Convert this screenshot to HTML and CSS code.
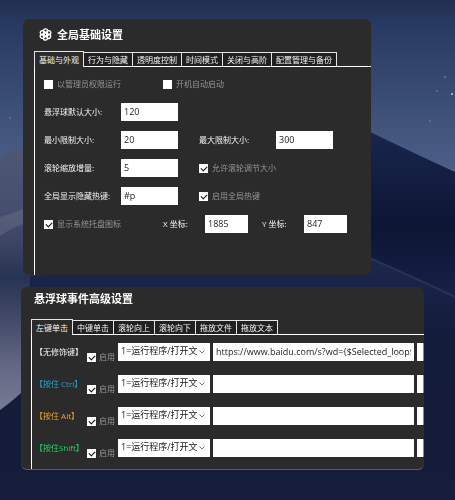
FILE: index.html
```html
<!DOCTYPE html>
<html lang="zh-CN">
<head>
<meta charset="utf-8">
<meta name="viewport" content="width=device-width, initial-scale=1">
<title>悬浮球设置</title>
<link rel="stylesheet" href="styles.css">
</head>
<body>
<svg class="wallpaper" viewBox="0 0 455 500" preserveAspectRatio="none" aria-hidden="true">
  <defs>
    <linearGradient id="sky" x1="0" y1="0" x2="0" y2="1">
      <stop offset="0" stop-color="#21304f"/>
      <stop offset=".05" stop-color="#293a62"/>
      <stop offset=".2" stop-color="#3a4d74"/>
      <stop offset=".34" stop-color="#4d5f88"/>
    </linearGradient>
    <linearGradient id="left" x1="0" y1="0" x2="0" y2="1">
      <stop offset="0" stop-color="#4e5773"/>
      <stop offset=".22" stop-color="#464f6e"/>
      <stop offset=".34" stop-color="#3d4665"/>
      <stop offset=".48" stop-color="#283453"/>
      <stop offset=".6" stop-color="#3d4563"/>
      <stop offset=".8" stop-color="#626783"/>
      <stop offset="1" stop-color="#7b7f98"/>
    </linearGradient>
    <linearGradient id="right" x1="0" y1="0" x2="0" y2="1">
      <stop offset="0" stop-color="#1a2750"/>
      <stop offset=".5" stop-color="#0d1534"/>
      <stop offset="1" stop-color="#1c2750"/>
    </linearGradient>
    <linearGradient id="floor" x1="0" y1="0" x2="0" y2="1">
      <stop offset="0" stop-color="#1c284e"/>
      <stop offset=".3" stop-color="#141c3c"/>
      <stop offset="1" stop-color="#161c39"/>
    </linearGradient>
  </defs>
  <rect width="455" height="500" fill="url(#sky)"/>
  <path d="M0 158 Q12 149 30 146 L200 160 V420 H0Z" fill="url(#left)"/>
  <path d="M0 217 Q14 213 30 206 V222 Q14 226 0 236Z" fill="#8a8fa5" opacity=".25"/>
  <path d="M350 122 Q390 142 455 172 V330 H350Z" fill="url(#right)"/>
  <path d="M0 410 Q14 400 24 390 L30 276 Q200 266 365 256 Q420 280 455 297 V500 H0Z" fill="url(#floor)"/>
  <path d="M365 256 Q420 280 455 297" fill="none" stroke="#263259" stroke-width="2"/>
  <g fill="#c3cbe0">
    <circle cx="445" cy="77" r="1" opacity=".4"/>
    <circle cx="452" cy="94" r="1"/>
    <circle cx="437" cy="91" r="1" opacity=".3"/>
    <circle cx="430" cy="121" r="1" opacity=".3"/>
    <circle cx="10" cy="118" r="1" opacity=".3"/>
  </g>
</svg>

<main class="desktop">
  <section class="panel panel-global" aria-labelledby="global-title">
    <h1 class="title" id="global-title">
      <svg class="title-icon" viewBox="0 0 24 24" aria-hidden="true">
        <g fill="none" stroke="currentColor" stroke-width="2.500">
          <circle cx="12" cy="12" r="4"/>
          <circle cx="12" cy="5.500" r="4"/>
          <circle cx="12" cy="5.500" r="4" transform="rotate(60 12 12)"/>
          <circle cx="12" cy="5.500" r="4" transform="rotate(120 12 12)"/>
          <circle cx="12" cy="5.500" r="4" transform="rotate(180 12 12)"/>
          <circle cx="12" cy="5.500" r="4" transform="rotate(240 12 12)"/>
          <circle cx="12" cy="5.500" r="4" transform="rotate(300 12 12)"/>
        </g>
      </svg>
      全局基础设置
    </h1>
    <div class="tabs" role="tablist">
      <button class="tab active" role="tab" aria-selected="true">基础与外观</button>
      <button class="tab" role="tab">行为与隐藏</button>
      <button class="tab" role="tab">透明度控制</button>
      <button class="tab" role="tab">时间模式</button>
      <button class="tab" role="tab">关闭与高阶</button>
      <button class="tab" role="tab">配置管理与备份</button>
    </div>
    <form class="page settings">
      <div class="row row-checks">
        <label class="check"><input type="checkbox">以管理员权限运行</label>
        <label class="check"><input type="checkbox">开机自动启动</label>
      </div>
      <div class="row">
        <label for="size">悬浮球默认大小:</label>
        <input class="field" id="size" type="text" value="120">
      </div>
      <div class="row">
        <label for="min">最小限制大小:</label>
        <input class="field" id="min" type="text" value="20">
        <label for="max">最大限制大小:</label>
        <input class="field" id="max" type="text" value="300">
      </div>
      <div class="row">
        <label for="step">滚轮缩放增量:</label>
        <input class="field" id="step" type="text" value="5">
        <label class="check"><input type="checkbox" checked>允许滚轮调节大小</label>
      </div>
      <div class="row">
        <label for="hotkey">全局显示隐藏热键:</label>
        <input class="field" id="hotkey" type="text" value="#p">
        <label class="check"><input type="checkbox" checked>启用全局热键</label>
      </div>
      <div class="row row-position">
        <label class="check"><input type="checkbox" checked>显示系统托盘图标</label>
        <label for="x">X 坐标:</label>
        <input class="field" id="x" type="text" value="1885">
        <label for="y">Y 坐标:</label>
        <input class="field" id="y" type="text" value="847">
      </div>
    </form>
  </section>

  <section class="panel panel-events" aria-labelledby="events-title">
    <h2 class="title" id="events-title">悬浮球事件高级设置</h2>
    <div class="tabs" role="tablist">
      <button class="tab active" role="tab" aria-selected="true">左键单击</button>
      <button class="tab" role="tab">中键单击</button>
      <button class="tab" role="tab">滚轮向上</button>
      <button class="tab" role="tab">滚轮向下</button>
      <button class="tab" role="tab">拖放文件</button>
      <button class="tab" role="tab">拖放文本</button>
    </div>
    <form class="page events">
      <div class="event">
        <span class="key">【无修饰键】</span>
        <label class="check"><input type="checkbox" checked>启用</label>
        <span class="picker"><select class="field" aria-label="动作"><option>1=运行程序/打开文件</option></select><svg viewBox="0 0 6 4" aria-hidden="true"><path d="M.5 .5 3 3 5.500 .5"/></svg></span>
        <input class="field" type="text" aria-label="参数" value="https://www.baidu.com/s?wd={$Selected_loop$}">
        <button class="more" type="button" aria-label="浏览"></button>
      </div>
      <div class="event">
        <span class="key ctrl">【按住 Ctrl】</span>
        <label class="check"><input type="checkbox" checked>启用</label>
        <span class="picker"><select class="field" aria-label="动作"><option>1=运行程序/打开文件</option></select><svg viewBox="0 0 6 4" aria-hidden="true"><path d="M.5 .5 3 3 5.500 .5"/></svg></span>
        <input class="field" type="text" aria-label="参数">
        <button class="more" type="button" aria-label="浏览"></button>
      </div>
      <div class="event">
        <span class="key alt">【按住 Alt】</span>
        <label class="check"><input type="checkbox" checked>启用</label>
        <span class="picker"><select class="field" aria-label="动作"><option>1=运行程序/打开文件</option></select><svg viewBox="0 0 6 4" aria-hidden="true"><path d="M.5 .5 3 3 5.500 .5"/></svg></span>
        <input class="field" type="text" aria-label="参数">
        <button class="more" type="button" aria-label="浏览"></button>
      </div>
      <div class="event">
        <span class="key shift">【按住Shift】</span>
        <label class="check"><input type="checkbox" checked>启用</label>
        <span class="picker"><select class="field" aria-label="动作"><option>1=运行程序/打开文件</option></select><svg viewBox="0 0 6 4" aria-hidden="true"><path d="M.5 .5 3 3 5.500 .5"/></svg></span>
        <input class="field" type="text" aria-label="参数">
        <button class="more" type="button" aria-label="浏览"></button>
      </div>
    </form>
  </section>
</main>
</body>
</html>
```

FILE: styles.css
```css
* {
  box-sizing: border-box;
}

body {
  margin: 0;
  min-height: 100vh;
  background: #151b38;
  color: #f4f4f4;
  font: 8px/12px "Open Sans", "Noto Sans CJK SC", sans-serif;
}

/* Wallpaper lies behind both panels */
.wallpaper {
  position: fixed;
  inset: 0;
  z-index: -1;
  width: 100%;
  height: 100%;
}

.desktop {
  display: flex;
  flex-direction: column;
  gap: 12px;
  padding: 19px 31px 29px 21px;
}

.panel {
  overflow: hidden;
  border-radius: 6px;
  background: #2b2b2b;
}

.panel-global {
  margin: 0 53px 0 2px;
  padding: 7px 0 0 11px;
}

.panel-events {
  padding: 3px 0 0 10px;
  border-bottom: 1px solid #535d62;
}

.title {
  display: flex;
  align-items: center;
  gap: 5px;
  margin: 0 0 8px 5px;
  color: #fff;
  font-size: 11px;
  line-height: 17px;
}

.panel-events .title {
  margin: 0 0 12px 3px;
}

.title-icon {
  width: 13px;
  height: 13px;
}

.tabs {
  display: flex;
  align-items: flex-end;
  height: 15px;
}

.tab {
  height: 14px;
  padding: 0 4px;
  border: solid #e4e4e4;
  border-width: 1px 1px 0 0;
  border-radius: 0;
  background: #202020;
  color: #f4f4f4;
  font: inherit;
  white-space: nowrap;
}

.tab.active {
  z-index: 1;
  height: 16px;
  margin-bottom: -1px;
  border-left-width: 1px;
  background: #2b2b2b;
}

.page {
  border: solid #fff;
  border-width: 1px 0 0 1px;
}

.settings {
  display: flex;
  flex-direction: column;
  gap: 10px;
  padding: 8px 0 42px 9px;
}

.row {
  display: grid;
  grid-template-columns: 77px 57px 21px 77px 57px;
  align-items: center;
  min-height: 18px;
  white-space: nowrap;
}

.row .field + label {
  grid-column: 4;
}

.row.row-checks {
  grid-template-columns: 119px 1fr;
}

.row.row-position {
  grid-template-columns: 119px 42px 43px 14px 42px 43px;
}

.row.row-position .field + label {
  grid-column: 5;
}

.check {
  display: flex;
  align-items: center;
  gap: 4px;
  color: #969696;
  white-space: nowrap;
}

.check input {
  display: grid;
  flex: none;
  place-items: center;
  appearance: none;
  width: 9px;
  height: 9px;
  margin: 0;
  background: #fff;
}

.check input:checked::before {
  content: "";
  width: 5px;
  height: 3px;
  margin-top: -1px;
  border: solid #111;
  border-width: 0 0 1px 1px;
  transform: rotate(-45deg);
}

.field {
  width: 100%;
  min-width: 0;
  height: 18px;
  padding: 0 3px 2px;
  border: 0;
  border-radius: 0;
  background: #fff;
  color: #222;
  font: 9px/16px "Open Sans", "Noto Sans CJK SC", sans-serif;
}

.events {
  display: flex;
  flex-direction: column;
  gap: 14px;
  padding: 8px 0 12px 3px;
}

.event {
  display: grid;
  grid-template-columns: 49px 28px 92px 1fr 7px;
  grid-template-rows: 18px;
  column-gap: 3px;
}

.key {
  line-height: 17px;
  white-space: nowrap;
}

.ctrl { color: #21a6d6; }
.alt { color: #f0a51e; }
.shift { color: #1fd564; }

.event .check {
  align-self: start;
  gap: 3px;
  padding-top: 8px;
}

.picker {
  display: grid;
  grid-template-columns: 1fr 11px;
  align-items: center;
}

.picker select {
  grid-area: 1 / 1 / 2 / 3;
  appearance: none;
  padding-right: 12px;
}

.picker svg {
  grid-area: 1 / 2;
  width: 6px;
  height: 4px;
  pointer-events: none;
}

.picker path {
  fill: none;
  stroke: #777;
}

.more {
  height: 18px;
  padding: 0;
  border: 0;
  border-right: 1px solid #888;
  background: #fff;
}
```
